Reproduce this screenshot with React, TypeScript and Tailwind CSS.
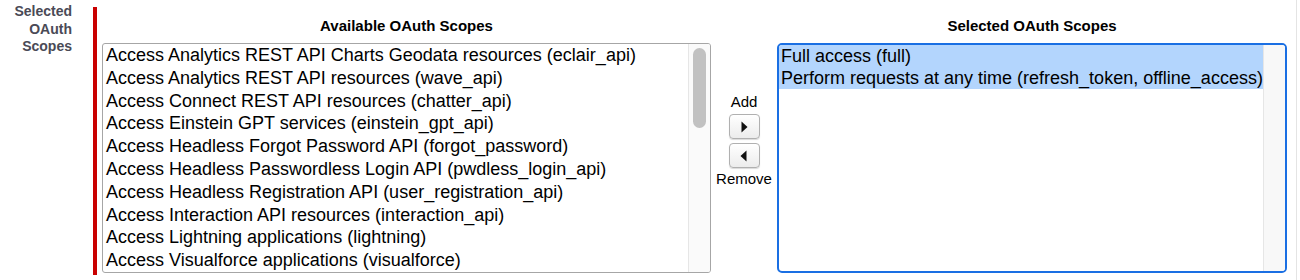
import React from "react";

const available = [
  "Access Analytics REST API Charts Geodata resources (eclair_api)",
  "Access Analytics REST API resources (wave_api)",
  "Access Connect REST API resources (chatter_api)",
  "Access Einstein GPT services (einstein_gpt_api)",
  "Access Headless Forgot Password API (forgot_password)",
  "Access Headless Passwordless Login API (pwdless_login_api)",
  "Access Headless Registration API (user_registration_api)",
  "Access Interaction API resources (interaction_api)",
  "Access Lightning applications (lightning)",
  "Access Visualforce applications (visualforce)",
];

const selected = [
  "Full access (full)",
  "Perform requests at any time (refresh_token, offline_access)",
];

function ArrowButton({ dir }: { dir: "right" | "left" }) {
  return (
    <button className="flex h-[25px] w-[31px] items-center justify-center rounded-[4px] border border-[#b0b0b0] bg-gradient-to-b from-white to-[#ececec] shadow-[0_1px_1px_rgba(0,0,0,0.15)]">
      <svg width="8" height="12" viewBox="0 0 8 12">
        {dir === "right" ? (
          <path d="M1.5 0.5 L7.5 6 L1.5 11.5 Z" fill="#111" />
        ) : (
          <path d="M6.5 0.5 L0.5 6 L6.5 11.5 Z" fill="#111" />
        )}
      </svg>
    </button>
  );
}

export default function App() {
  return (
    <div className="flex h-[280px] w-[1300px] bg-white font-['Liberation_Sans',Arial,sans-serif] text-black">
      <div className="w-[72px] shrink-0 pt-[3px] text-right text-[14px] font-bold leading-[17.5px] text-[#4a4a56]">
        Selected
        <br />
        OAuth
        <br />
        Scopes
      </div>
      <div className="ml-[21px] mt-[7px] h-[268px] w-[4px] shrink-0 bg-[#c90000]" />

      <div className="ml-[5px] flex">
        {/* available */}
        <div className="flex w-[609px] flex-col">
          <div className="h-[43px] pt-[17px] text-center text-[15px] font-bold leading-[18px]">
            Available OAuth Scopes
          </div>
          <div className="flex h-[230px] overflow-hidden rounded-[3px] border border-[#a6a6a6]">
            <div className="flex-1 pl-[3px] text-[18px] leading-[22.8px]">
              {available.map((s) => (
                <div key={s} className="whitespace-nowrap">
                  {s}
                </div>
              ))}
            </div>
            <div className="w-[22px] border-l border-[#e6e6e6] bg-[#fafafa] px-[4px] pt-[4px]">
              <div className="h-[80px] rounded-full bg-[#c1c1c1]" />
            </div>
          </div>
        </div>

        {/* add / remove */}
        <div className="flex w-[66px] flex-col items-center pt-[93px] text-[15px] leading-[18px]">
          <div className="mb-[3px]">Add</div>
          <ArrowButton dir="right" />
          <div className="h-[4px]" />
          <ArrowButton dir="left" />
          <div className="mt-[2px]">Remove</div>
        </div>

        {/* selected */}
        <div className="flex w-[510px] flex-col">
          <div className="h-[43px] pt-[17px] text-center text-[15px] font-bold leading-[18px]">
            Selected OAuth Scopes
          </div>
          <div className="flex h-[230px] overflow-hidden rounded-[5px] border-2 border-[#1a6fe3]">
            <div className="flex-1 text-[18px] leading-[22px]">
              {selected.map((s) => (
                <div key={s} className="whitespace-nowrap bg-[#b3d5fd] pl-[2px]">
                  {s}
                </div>
              ))}
            </div>
            <div className="w-[22px] border-l border-[#e6e6e6] bg-[#f8f8f8]" />
          </div>
        </div>
      </div>

      <div className="ml-[9px] h-full w-px bg-[#e4e4e4]" />
    </div>
  );
}
